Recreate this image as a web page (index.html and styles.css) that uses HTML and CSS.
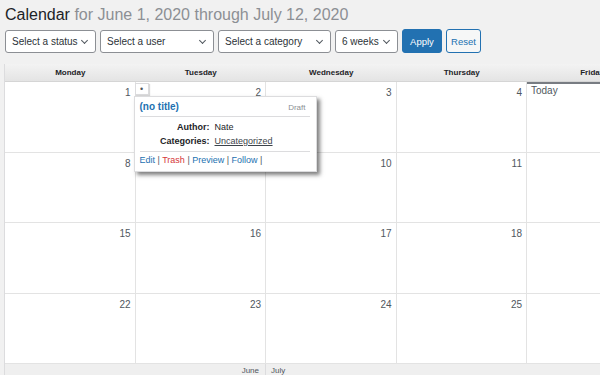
FILE: index.html
```html
<!DOCTYPE html>
<html lang="en">
<head>
    <meta charset="UTF-8">
    <meta name="viewport" content="width=device-width, initial-scale=1.0">
    <title>Calendar</title>
    <link rel="stylesheet" href="styles.css">
</head>
<body>
    <div class="wrap">
        <h1 class="title">Calendar <span class="range">for June 1, 2020 through July 12, 2020</span></h1>

        <form class="filters">
            <div class="select w-status">Select a status<span class="chev"></span></div>
            <div class="select w-user">Select a user<span class="chev"></span></div>
            <div class="select w-cat">Select a category<span class="chev"></span></div>
            <div class="select w-weeks">6 weeks<span class="chev"></span></div>
            <button type="button" class="btn btn-primary">Apply</button>
            <button type="button" class="btn btn-secondary">Reset</button>
        </form>

        <div class="calendar">
            <div class="grid">
                <div class="head">Monday</div>
                <div class="head">Tuesday</div>
                <div class="head">Wednesday</div>
                <div class="head">Thursday</div>
                <div class="head">Friday</div>
                <div class="head">Saturday</div>
                <div class="head">Sunday</div>

                <!-- week 1 -->
                <div class="day"><span class="num">1</span></div>
                <div class="day has-post">
                    <span class="num">2</span>
                    <span class="post-dot">&bull;</span>
                    <div class="popup">
                        <div class="popup-top">
                            <a href="#" class="post-title">(no title)</a>
                            <span class="post-status">Draft</span>
                        </div>
                        <table class="meta">
                            <tr><th>Author:</th><td>Nate</td></tr>
                            <tr><th>Categories:</th><td><a href="#" class="cat">Uncategorized</a></td></tr>
                        </table>
                        <div class="actions">
                            <a href="#">Edit</a> | <a href="#" class="trash">Trash</a> | <a href="#">Preview</a> | <a href="#">Follow</a> |
                        </div>
                    </div>
                </div>
                <div class="day"><span class="num">3</span></div>
                <div class="day"><span class="num">4</span></div>
                <div class="day today"><span class="today-label">Today</span><span class="num">5</span></div>
                <div class="day"><span class="num">6</span></div>
                <div class="day"><span class="num">7</span></div>

                <!-- week 2 -->
                <div class="day"><span class="num">8</span></div>
                <div class="day"><span class="num">9</span></div>
                <div class="day"><span class="num">10</span></div>
                <div class="day"><span class="num">11</span></div>
                <div class="day"><span class="num">12</span></div>
                <div class="day"><span class="num">13</span></div>
                <div class="day"><span class="num">14</span></div>

                <!-- week 3 -->
                <div class="day"><span class="num">15</span></div>
                <div class="day"><span class="num">16</span></div>
                <div class="day"><span class="num">17</span></div>
                <div class="day"><span class="num">18</span></div>
                <div class="day"><span class="num">19</span></div>
                <div class="day"><span class="num">20</span></div>
                <div class="day"><span class="num">21</span></div>

                <!-- week 4 -->
                <div class="day"><span class="num">22</span></div>
                <div class="day"><span class="num">23</span></div>
                <div class="day"><span class="num">24</span></div>
                <div class="day"><span class="num">25</span></div>
                <div class="day"><span class="num">26</span></div>
                <div class="day"><span class="num">27</span></div>
                <div class="day"><span class="num">28</span></div>

                <!-- month labels -->
                <div class="month"></div>
                <div class="month month-end">June</div>
                <div class="month month-start">July</div>
                <div class="month"></div>
                <div class="month"></div>
                <div class="month"></div>
                <div class="month"></div>
            </div>
        </div>
    </div>
</body>
</html>
```

FILE: styles.css
```css
html, body {
    margin: 0;
    padding: 0;
    overflow: hidden;
}

body {
    font-family: "Liberation Sans", Arial, sans-serif;
    background-color: #f1f1f1;
    color: #1d2327;
    width: 600px;
    height: 375px;
}

.wrap {
    padding: 4px 0 0 4px;
}

.title {
    margin: 0 0 0 1px;
    font-size: 16px;
    font-weight: normal;
    line-height: 22px;
    color: #1d2327;
}

.range {
    color: #8c8f94;
}

.filters {
    display: flex;
    gap: 4px;
    margin: 4px 0 0 1px;
    height: 23px;
}

.select {
    position: relative;
    box-sizing: border-box;
    height: 23px;
    padding: 0 20px 0 6px;
    border: 1px solid #8c8f94;
    border-radius: 3px;
    background: #fff;
    font-size: 10px;
    line-height: 21px;
    color: #2c3338;
    white-space: nowrap;
}

.chev {
    position: absolute;
    right: 8px;
    top: 7px;
    width: 4px;
    height: 4px;
    border-right: 1.2px solid #50575e;
    border-bottom: 1.2px solid #50575e;
    transform: rotate(45deg);
}

.w-status { width: 91px; }
.w-user { width: 114px; }
.w-cat { width: 113px; }
.w-weeks { width: 63px; }

.btn {
    box-sizing: border-box;
    height: 24px;
    margin-top: -1px;
    padding: 0;
    border-radius: 3px;
    font-family: inherit;
    font-size: 9.5px;
    cursor: pointer;
}

.btn-primary {
    background-color: #2271b1;
    border: 1px solid #2271b1;
    color: #fff;
    width: 40px;
}

.btn-secondary {
    background-color: #f6f7f7;
    border: 1px solid #2271b1;
    color: #2271b1;
    width: 35px;
}

.calendar {
    margin-top: 11px;
    border-left: 1px solid #dcdcde;
}

.grid {
    display: grid;
    grid-template-columns: repeat(7, 130.5px);
    grid-template-rows: 18px repeat(4, 70.5px) 20px;
}

.head {
    background: linear-gradient(#f3f3f3, #e4e4e4);
    border-bottom: 1px solid #d5d5d5;
    font-size: 8px;
    font-weight: bold;
    text-align: center;
    line-height: 18px;
    color: #1d2327;
    box-sizing: border-box;
}

.day {
    position: relative;
    box-sizing: border-box;
    background: #fff;
    border-right: 1px solid #e3e3e3;
    border-bottom: 1px solid #e3e3e3;
    text-align: right;
    padding: 3px 4px 0 0;
    line-height: 12px;
}

.num {
    font-size: 10px;
    color: #50575e;
}

.today {
    border-top: 2px solid #787c82;
    padding-top: 1px;
}

.today-label {
    float: left;
    margin-left: 4px;
    font-size: 10px;
    color: #50575e;
}

.post-dot {
    position: absolute;
    left: -1px;
    top: 1px;
    width: 14px;
    height: 12px;
    box-sizing: border-box;
    background: #fff;
    border: 1px solid #dcdcde;
    box-shadow: 1px 1px 1px rgba(0, 0, 0, 0.15);
    font-size: 9px;
    line-height: 10px;
    text-align: center;
    color: #50575e;
}

.popup {
    position: absolute;
    left: -2px;
    top: 14px;
    z-index: 2;
    width: 183px;
    box-sizing: border-box;
    padding: 4px 6px 6px 5px;
    background: #fff;
    border: 1px solid #dcdcde;
    box-shadow: 3px 3px 4px rgba(0, 0, 0, 0.5);
    text-align: left;
    font-size: 9px;
    line-height: normal;
}

.popup a {
    color: #2271b1;
    text-decoration: none;
}

.popup-top {
    display: flex;
    justify-content: space-between;
    align-items: baseline;
    padding-bottom: 4px;
    border-bottom: 1px solid #dcdcde;
}

.post-title {
    font-weight: bold;
    font-size: 10px;
}

.post-status {
    color: #8c8f94;
    font-size: 8px;
    margin-right: 4px;
}

.meta {
    border-collapse: collapse;
    margin: 3px 0 3px 0;
    width: 100%;
}

.meta th {
    width: 70px;
    text-align: right;
    padding: 2px 5px 2px 0;
    font-weight: bold;
    color: #1d2327;
}

.meta td {
    padding: 2px 0;
    color: #1d2327;
}

.popup .cat {
    color: #3c434a;
    text-decoration: underline;
}

.actions {
    border-top: 1px solid #dcdcde;
    padding-top: 3px;
    color: #50575e;
}

.popup .trash {
    color: #d63638;
}

.month {
    background: #efefef;
    font-size: 8px;
    color: #50575e;
    line-height: 14px;
    box-sizing: border-box;
}

.month-end {
    text-align: right;
    padding-right: 6px;
    border-right: 1px solid #dcdcde;
}

.month-start {
    padding-left: 5px;
}
```
